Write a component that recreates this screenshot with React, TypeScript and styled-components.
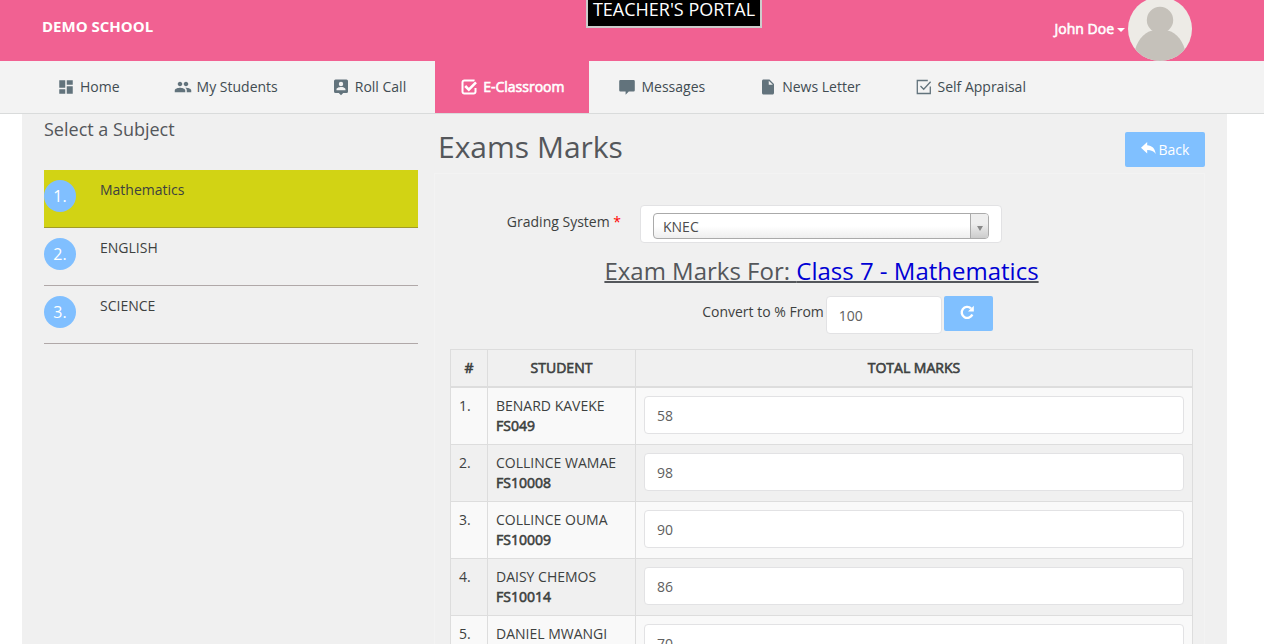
import React from "react";
import styled, { createGlobalStyle, css } from "styled-components";
import { MdDashboard, MdPeople, MdInsertDriveFile } from "react-icons/md";

const GlobalStyle = createGlobalStyle`
  *, *::before, *::after { box-sizing: border-box; }
  html, body, #root { min-height: 100vh; }
  body {
    margin: 0;
    background: #fff;
    color: #3d4140;
    font: 400 14px/20px "Open Sans", sans-serif;
  }
  #root { display: flex; flex-direction: column; }
  h1, h2, h3, ol, p { margin: 0; padding: 0; }
  h1, h2, h3 { font-weight: 400; color: #54575b; }
  button, input, select { font: inherit; }
`;

const thickened = css`
  font-weight: 400;
  -webkit-text-stroke: 0.6px currentColor;
`;

const TopBar = styled.header`
  display: grid;
  grid-template-columns: 544fr auto 430fr;
  align-items: start;
  height: 61px;
  padding: 0 72px 0 42px;
  background: #f16192;
`;

const Brand = styled.a`
  padding-top: 16px;
  color: #fff;
  font-size: 15px;
  font-weight: 700;
  text-decoration: none;
`;

const PortalTag = styled.p`
  padding: 0 5px 8px;
  border: 2px solid #ccc;
  border-top: 0;
  background: #000;
  color: #fff;
  font-size: 18px;
  line-height: 18px;
`;

const UserButton = styled.button`
  display: flex;
  align-items: center;
  justify-self: end;
  height: 61px;
  padding: 0;
  border: 0;
  background: none;
  color: #fff;
`;

const UserName = styled.span`
  ${thickened}
  padding-bottom: 4px;
`;

const Caret = styled.span`
  margin: 0 3px 2px 3px;
  border: 4px solid transparent;
  border-top-color: #fff;
  border-bottom: 0;
`;

const Avatar = styled.svg`
  width: 64px;
  height: 64px;
  margin-top: -3px;
`;

const NavBar = styled.nav`
  display: flex;
  height: 53px;
  padding-left: 30px;
  border-bottom: 1px solid #d9dbdb;
  background: #f3f3f3;
`;

const NavLink = styled.a<{ $active?: boolean }>`
  display: flex;
  align-items: center;
  gap: 5px;
  padding: 0 27px;
  color: #414c52;
  text-decoration: none;

  svg { width: 18px; height: 18px; color: #62737c; flex: none; }

  ${({ $active }) =>
    $active &&
    css`
      margin: 0 2px;
      padding: 0 25px;
      background: #f16192;
      color: #fff;
      svg { color: #fff; }
      span { ${thickened} }
    `}
`;

const Page = styled.main`
  display: flex;
  flex: 1;
  gap: 16px;
  margin: 0 37px 0 22px;
  padding: 0 22px;
  background: #f0f0f0;
`;

const Subjects = styled.aside`
  flex: 0 0 33%;
  max-width: 374px;
`;

const SubjectsTitle = styled.h3`
  padding: 5px 0 31px;
  font-size: 18px;
  line-height: 20px;
`;

const SubjectList = styled.ol`
  list-style: none;
`;

const SubjectLink = styled.a<{ $selected: boolean }>`
  display: flex;
  gap: 24px;
  height: 58px;
  padding-top: 10px;
  border-bottom: 1px solid ${({ $selected }) => ($selected ? "#a19b28" : "#b0a8a8")};
  background: ${({ $selected }) => ($selected ? "#d2d314" : "transparent")};
  color: #3d4140;
  text-decoration: none;
`;

const Badge = styled.span`
  flex: none;
  width: 32px;
  height: 32px;
  border-radius: 50%;
  background: #80bfff;
  color: #fff;
  font-size: 16px;
  line-height: 32px;
  text-align: center;
`;

const Content = styled.section`
  flex: 1;
  min-width: 0;
`;

const TitleRow = styled.div`
  display: flex;
  justify-content: space-between;
  align-items: flex-start;
  height: 59px;
  padding: 18px 0 0 4px;
`;

const PageTitle = styled.h1`
  font-size: 30px;
  line-height: 30px;
`;

const BlueButton = styled.button<{ $width: number }>`
  display: flex;
  align-items: center;
  justify-content: center;
  gap: 3px;
  width: ${({ $width }) => $width}px;
  height: 35px;
  padding: 0;
  border: 0;
  border-radius: 2px;
  background: #80c0ff;
  color: #fff;
`;

const Panel = styled.div`
  padding: 31px 11px 0 15px;
  border: 1px solid #f3f3f3;
  border-bottom: 0;
`;

const GradingRow = styled.div`
  display: grid;
  grid-template-columns: 171px 362px;
  gap: 19px;
`;

const GradingLabel = styled.label`
  padding-top: 7px;
  text-align: right;
`;

const Required = styled.span`
  color: #f00;
`;

const SelectFrame = styled.div`
  display: grid;
  height: 38px;
  padding: 7px 12px 3px;
  border: 1px solid #e2e2e4;
  border-radius: 4px;
  background: #fff;
`;

const SelectShell = styled.div`
  display: grid;
  grid-template-columns: 1fr 18px;
  height: 26px;
  border: 1px solid #aaa;
  border-radius: 4px;
  overflow: hidden;
  background: linear-gradient(#fff 50%, #eee);
`;

const SelectBox = styled.select`
  grid-area: 1 / 1 / 2 / 3;
  appearance: none;
  width: 100%;
  padding: 2px 26px 0 9px;
  border: 0;
  background: none;
  color: #4c4c4c;
`;

const SelectArrow = styled.span`
  grid-area: 1 / 2;
  display: grid;
  place-items: center;
  padding-top: 4px;
  border-left: 1px solid #aaa;
  background: linear-gradient(#eee 40%, #ccc);
  pointer-events: none;
`;

const ArrowDown = styled.span`
  border: 3px solid transparent;
  border-top: 5px solid #888;
  border-bottom: 0;
`;

const ExamHeading = styled.h2`
  padding: 14px 0 11px;
  font-size: 24px;
  line-height: 28px;
  text-align: center;
  text-decoration: underline;
  text-decoration-thickness: 2px;
  text-decoration-skip-ink: none;
`;

const ExamName = styled.span`
  color: #0000d4;
`;

const ConvertRow = styled.div`
  display: flex;
  justify-content: center;
  gap: 2px;
  padding-left: 52px;
`;

const ConvertLabel = styled.label`
  padding-top: 6px;
`;

const TextField = styled.input<{ $width?: string }>`
  display: block;
  width: ${({ $width = "100%" }) => $width};
  height: 38px;
  padding: 1px 12px 0;
  border: 1px solid #e2e2e4;
  border-radius: 4px;
  background: #fff;
  color: #606060;
`;

const MarksTable = styled.table`
  width: 100%;
  margin-top: 15px;
  border-collapse: collapse;

  th, td {
    padding: 8px;
    border: 1px solid #ddd;
    vertical-align: top;
    text-align: left;
  }
  th {
    ${thickened}
    border-bottom-width: 2px;
    text-align: center;
  }
  tbody tr { height: 57px; }
  tbody tr:nth-child(odd) { background: #f9f9f9; }
`;

const Admission = styled.strong`
  ${thickened}
  display: block;
`;

const CheckSquareBold = () => (
  <svg viewBox="0 0 18 18" fill="none" stroke="currentColor" strokeWidth="2">
    <path d="M15.500 10v3.700a1.800 1.800 0 0 1-1.800 1.800H4.300a1.800 1.800 0 0 1-1.800-1.800V4.300a1.800 1.800 0 0 1 1.800-1.800h9.400a1.800 1.800 0 0 1 .8.200" />
    <path d="M5.200 8l3.600 3.600 7.200-7.200" strokeWidth="2.600" />
  </svg>
);

const CheckBoxThin = () => (
  <svg viewBox="0 0 18 18" fill="none" stroke="currentColor" strokeWidth="1.300">
    <path d="M15.300 8.500v7H2.300v-13h10.500" />
    <path d="M5.500 8l3.200 3.300L15.600 3.800" />
  </svg>
);

const PersonPinSquare = () => (
  <svg viewBox="0 0 18 18" fill="currentColor" fillRule="evenodd">
    <path d="M3.500 1.500h11a1.500 1.500 0 0 1 1.500 1.500v10.500a1.500 1.500 0 0 1-1.500 1.500h-3.300L9 17.200 6.800 15H3.500A1.500 1.500 0 0 1 2 13.500V3a1.500 1.500 0 0 1 1.500-1.500zM9 3.800a2.200 2.200 0 1 0 0 4.400 2.200 2.200 0 0 0 0-4.400zM4.500 12.200h9v-.8c0-1.500-3-2.300-4.500-2.300s-4.500.8-4.500 2.300z" />
  </svg>
);

const CommentSolid = () => (
  <svg viewBox="0 0 18 18" fill="currentColor">
    <path d="M2.400 2h13.200a1.200 1.200 0 0 1 1.200 1.200v9a1.200 1.200 0 0 1-1.200 1.200h-4.800L7.600 16.800v-3.400H2.400a1.200 1.200 0 0 1-1.200-1.200v-9A1.200 1.200 0 0 1 2.400 2z" />
  </svg>
);

const ReplyIcon = () => (
  <svg width="15" height="16" viewBox="0 0 15 16" fill="#fff">
    <path d="M6.200 0v3.200c4.800.2 7.800 3.200 8.500 8.800-2-3-4.500-4-8.500-4v3.400L0 5.800z" />
  </svg>
);

const RefreshIcon = () => (
  <svg width="16" height="18" viewBox="0 0 16 18" fill="none">
    <path d="M12.300 9.500A5.500 5.500 0 1 1 11 3.400" stroke="#fff" strokeWidth="2.400" />
    <path d="M13.800 .8v5.800H8z" fill="#fff" />
  </svg>
);

const navItems = [
  { label: "Home", icon: <MdDashboard /> },
  { label: "My Students", icon: <MdPeople /> },
  { label: "Roll Call", icon: <PersonPinSquare /> },
  { label: "E-Classroom", icon: <CheckSquareBold />, active: true },
  { label: "Messages", icon: <CommentSolid /> },
  { label: "News Letter", icon: <MdInsertDriveFile /> },
  { label: "Self Appraisal", icon: <CheckBoxThin /> },
];

const subjects = ["Mathematics", "ENGLISH", "SCIENCE"];

const students = [
  { name: "BENARD KAVEKE", id: "FS049", marks: 58 },
  { name: "COLLINCE WAMAE", id: "FS10008", marks: 98 },
  { name: "COLLINCE OUMA", id: "FS10009", marks: 90 },
  { name: "DAISY CHEMOS", id: "FS10014", marks: 86 },
  { name: "DANIEL MWANGI", id: "", marks: 70 },
];

export default function App() {
  return (
    <>
      <GlobalStyle />
      <TopBar>
        <Brand href="#">DEMO SCHOOL</Brand>
        <PortalTag>TEACHER'S PORTAL</PortalTag>
        <UserButton type="button">
          <UserName>John Doe</UserName>
          <Caret />
          <Avatar viewBox="0 0 64 64">
            <defs>
              <clipPath id="avatar-clip"><circle cx="32" cy="32" r="32" /></clipPath>
            </defs>
            <g clipPath="url(#avatar-clip)">
              <rect width="64" height="64" fill="#edebe6" />
              <circle cx="32" cy="23" r="13.200" fill="#c5c1ba" />
              <path d="M7 53C10 41 19 33.500 26 33.500h12C45 33.500 54 41 57 53v11H7z" fill="#c5c1ba" />
            </g>
          </Avatar>
        </UserButton>
      </TopBar>
      <NavBar>
        {navItems.map(({ label, icon, active }) => (
          <NavLink key={label} href="#" $active={active}>
            {icon}
            <span>{label}</span>
          </NavLink>
        ))}
      </NavBar>
      <Page>
        <Subjects>
          <SubjectsTitle>Select a Subject</SubjectsTitle>
          <SubjectList>
            {subjects.map((subject, i) => (
              <li key={subject}>
                <SubjectLink href="#" $selected={i === 0}>
                  <Badge>{i + 1}.</Badge>
                  {subject}
                </SubjectLink>
              </li>
            ))}
          </SubjectList>
        </Subjects>
        <Content>
          <TitleRow>
            <PageTitle>Exams Marks</PageTitle>
            <BlueButton type="button" $width={80}>
              <ReplyIcon />
              Back
            </BlueButton>
          </TitleRow>
          <Panel>
            <GradingRow>
              <GradingLabel htmlFor="grading">
                Grading System <Required>*</Required>
              </GradingLabel>
              <SelectFrame>
                <SelectShell>
                  <SelectArrow><ArrowDown /></SelectArrow>
                  <SelectBox id="grading" defaultValue="KNEC">
                    <option>KNEC</option>
                  </SelectBox>
                </SelectShell>
              </SelectFrame>
            </GradingRow>
            <ExamHeading>
              Exam Marks For: <ExamName>Class 7 - Mathematics</ExamName>
            </ExamHeading>
            <ConvertRow>
              <ConvertLabel htmlFor="convert">Convert to % From</ConvertLabel>
              <TextField id="convert" $width="116px" defaultValue="100" />
              <BlueButton type="button" $width={49} aria-label="Convert">
                <RefreshIcon />
              </BlueButton>
            </ConvertRow>
            <MarksTable>
              <colgroup>
                <col width="37" />
                <col width="148" />
                <col />
              </colgroup>
              <thead>
                <tr>
                  <th>#</th>
                  <th>STUDENT</th>
                  <th>TOTAL MARKS</th>
                </tr>
              </thead>
              <tbody>
                {students.map(({ name, id, marks }, i) => (
                  <tr key={name}>
                    <td>{i + 1}.</td>
                    <td>
                      {name}
                      {id && <Admission>{id}</Admission>}
                    </td>
                    <td>
                      <TextField defaultValue={marks} aria-label={`Total marks for ${name}`} />
                    </td>
                  </tr>
                ))}
              </tbody>
            </MarksTable>
          </Panel>
        </Content>
      </Page>
    </>
  );
}
